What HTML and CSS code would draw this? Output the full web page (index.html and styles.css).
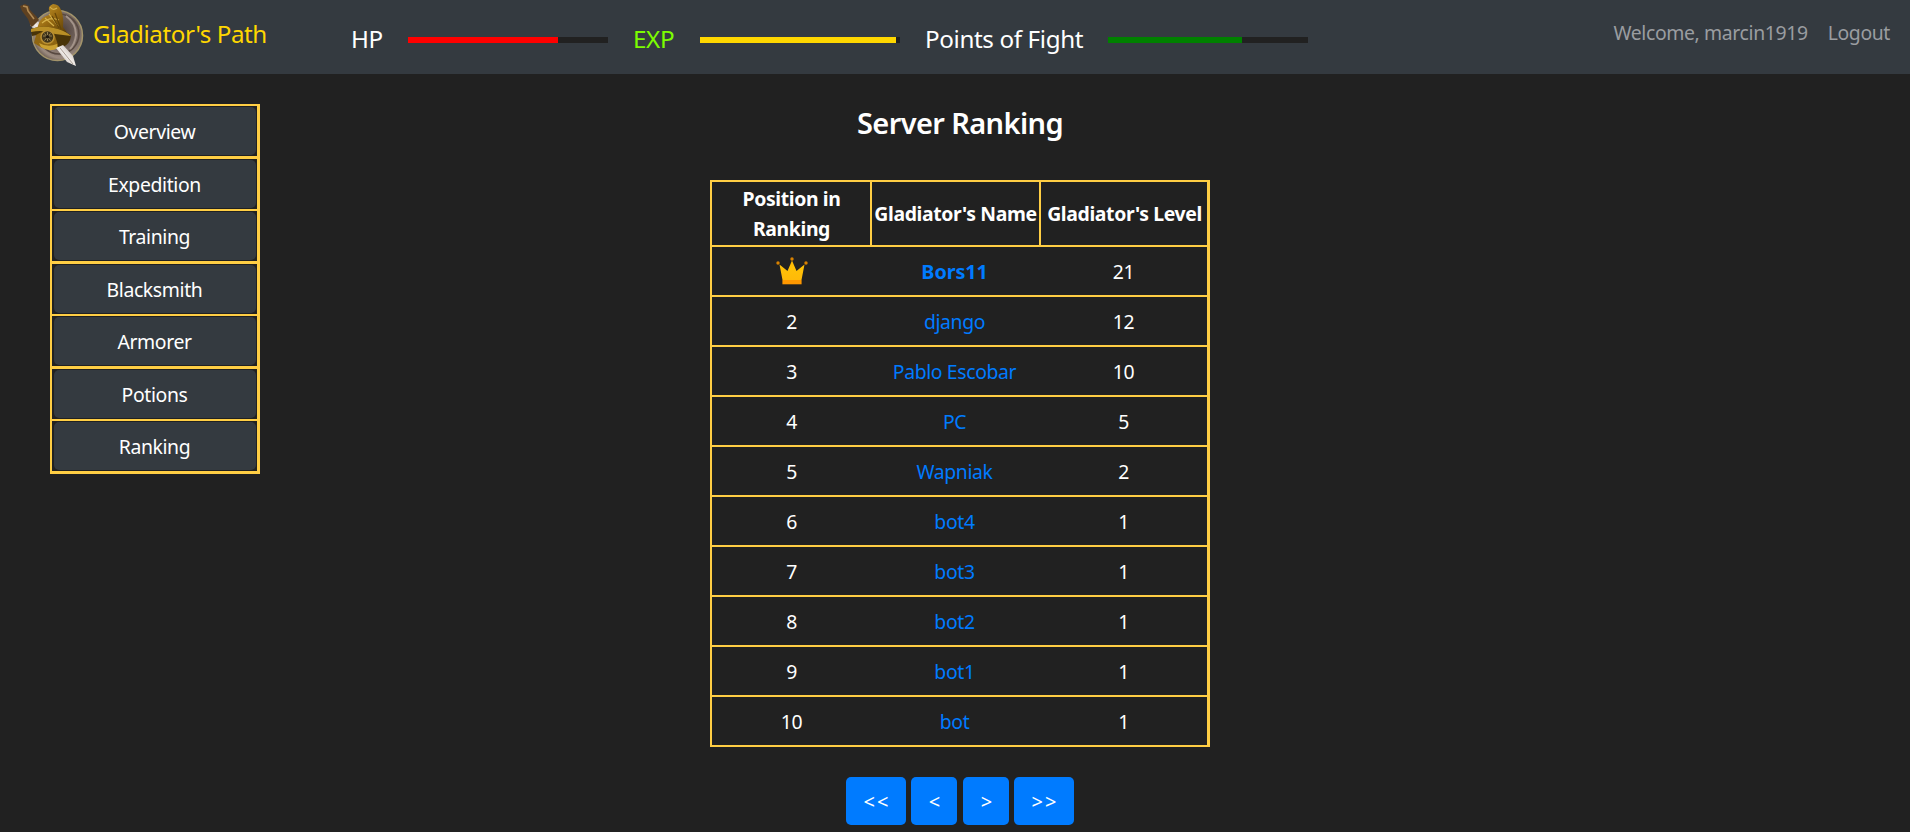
FILE: index.html
```html
<!DOCTYPE html>
<html lang="en">
<head>
<meta charset="utf-8">
<title>Gladiator's Path</title>
<link rel="stylesheet" href="styles.css">
</head>
<body>
<header class="navbar">
  <a class="brand">
    <svg class="logo" viewBox="0 0 64 62" width="64" height="62">
      <defs>
        <radialGradient id="shield" cx=".6" cy=".4" r=".65"><stop offset="0" stop-color="#4d403b"/><stop offset=".55" stop-color="#796a63"/><stop offset=".85" stop-color="#9b8a7f"/><stop offset="1" stop-color="#66574d"/></radialGradient>
        <linearGradient id="gold" x1="0" y1="0" x2="1" y2="1"><stop offset="0" stop-color="#cfa436"/><stop offset=".45" stop-color="#9a6c12"/><stop offset="1" stop-color="#452f05"/></linearGradient>
        <linearGradient id="blade" x1="0" y1="1" x2="1" y2="0"><stop offset="0" stop-color="#8b807a"/><stop offset=".5" stop-color="#f3eeea"/><stop offset="1" stop-color="#a99c94"/></linearGradient>
      </defs>
      <circle cx="37.500" cy="31.500" r="25" fill="url(#shield)" stroke="#a3946b" stroke-width="1.500"/>
      <circle cx="39" cy="30" r="20" fill="none" stroke="#584941" stroke-width="1.500"/>
      <path d="M46 12q10 7 10 19q-1 9-6 14" fill="none" stroke="#a39389" stroke-width="2"/>
      <path d="M10 21l6-5 9 7-7 7z" fill="url(#blade)"/>
      <path d="M0 2l5-2 4 2 1 4 6 6 3 4-6 6-2 1-3-8-6-8z" fill="#5f4120"/>
      <path d="M3 2l4 1 1 4 6 8" fill="none" stroke="#b08a54" stroke-width="1.600"/>
      <path d="M19 19q2-6 10-8 2-2 0-5-1-4 4-6 6 0 8 6 3 7 2 17l7 10-11 1-24-4z" fill="url(#gold)"/>
      <path d="M30 3q3 4 7 1M22 19q8-7 17-3M29 10l9 12M25 14l9 8" fill="none" stroke="#d6b14a" stroke-width="1.200"/>
      <path d="M35 9l6 16M32 12l7 12" fill="none" stroke="#654609" stroke-width="1.200"/>
      <path d="M11 25q12-5 27 0 10 3 13 7-1 8-8 11-9 2-14-5-8-9-17-6z" fill="#493408"/>
      <path d="M11 25q12-5 27 0 9 3 13 7-8-1-16-2-12-5-24-2z" fill="#b98f26"/>
      <path d="M16 31q10-7 19 1l3 9-5 4-11-1-8-5z" fill="#8f6612"/>
      <circle cx="27.500" cy="33" r="6.500" fill="#42361a" stroke="#b98f32" stroke-width="1.500"/>
      <path d="M23 32h9M24.500 29.500l6 7M30.500 29.500l-6 7M27.500 28v9" stroke="#a89463" stroke-width=".8"/>
      <circle cx="27.500" cy="32.800" r="1.800" fill="#201a10"/>
      <path d="M19 39q9 5 18 1l1 4q-9 5-17-1z" fill="#cba132"/>
      <path d="M36 44l7-3 10 11 3 10-9-4z" fill="url(#blade)"/>
      <path d="M40 44l13 16" stroke="#a89c93" stroke-width="1"/>
    </svg>
    <span class="brand-name">Gladiator's Path</span>
  </a>
  <div class="stats">
    <span class="stat-label">HP</span><div class="bar"><div class="fill hp" style="width:75%"></div></div>
    <span class="stat-label exp-label">EXP</span><div class="bar"><div class="fill exp" style="width:98%"></div></div>
    <span class="stat-label pof-label">Points of Fight</span><div class="bar"><div class="fill pof" style="width:67%"></div></div>
  </div>
  <nav class="account"><span>Welcome, marcin1919</span><a>Logout</a></nav>
</header>
<main class="page">
  <nav class="menu">
    <a class="menu-item"><span>Overview</span></a>
    <a class="menu-item"><span>Expedition</span></a>
    <a class="menu-item"><span>Training</span></a>
    <a class="menu-item"><span>Blacksmith</span></a>
    <a class="menu-item"><span>Armorer</span></a>
    <a class="menu-item"><span>Potions</span></a>
    <a class="menu-item"><span>Ranking</span></a>
  </nav>
  <section class="ranking">
    <h1 class="title">Server Ranking</h1>
    <div class="table">
      <div class="row head"><div>Position in<br>Ranking</div><div>Gladiator's Name</div><div>Gladiator's Level</div></div>
      <div class="row"><div><svg class="crown" viewBox="0 0 32 28" width="32" height="28">
        <defs><linearGradient id="crownFill" x1="0" y1="0" x2="0" y2="1"><stop offset="0" stop-color="#ffb300"/><stop offset=".35" stop-color="#ffc107"/><stop offset="1" stop-color="#ffba08"/></linearGradient></defs>
        <path d="M3.500 7.500L11.500 14 16 3.500 20.500 14 28.500 7.500 25.500 23H6.500z" fill="url(#crownFill)"/>
        <path d="M6.400 23h19.200v4.300H6.400z" fill="#ff9800"/>
        <circle cx="2" cy="6" r="1.700" fill="#d98200"/><circle cx="16" cy="2" r="1.700" fill="#d98200"/><circle cx="30" cy="6" r="1.700" fill="#d98200"/>
      </svg></div><div><a class="first">Bors11</a></div><div>21</div></div>
      <div class="row"><div>2</div><div><a>django</a></div><div>12</div></div>
      <div class="row"><div>3</div><div><a>Pablo Escobar</a></div><div>10</div></div>
      <div class="row"><div>4</div><div><a>PC</a></div><div>5</div></div>
      <div class="row"><div>5</div><div><a>Wapniak</a></div><div>2</div></div>
      <div class="row"><div>6</div><div><a>bot4</a></div><div>1</div></div>
      <div class="row"><div>7</div><div><a>bot3</a></div><div>1</div></div>
      <div class="row"><div>8</div><div><a>bot2</a></div><div>1</div></div>
      <div class="row"><div>9</div><div><a>bot1</a></div><div>1</div></div>
      <div class="row"><div>10</div><div><a>bot</a></div><div>1</div></div>
    </div>
    <div class="pager"><button class="wide">&lt;&lt;</button><button>&lt;</button><button>&gt;</button><button class="wide">&gt;&gt;</button></div>
  </section>
</main>
</body>
</html>
```
FILE: styles.css
```css
* { box-sizing: border-box; }
body {
  margin: 0;
  height: 832px;
  overflow: hidden;
  background: #212121;
  color: #fff;
  font: 19.4px/30px "Noto Sans", "Open Sans", sans-serif;
  letter-spacing: -.37px;
}
.navbar {
  display: flex;
  align-items: flex-start;
  height: 74px;
  padding: 3px 20px 0;
  background: #343a40;
}
.brand { display: flex; width: 331px; color: gold; }
.logo { flex: none; margin-top: 1px; }
.brand-name { padding: 13px 0 0 9px; font-size: 24.2px; line-height: 36px; letter-spacing: -.44px; white-space: nowrap; }
.stats {
  display: grid;
  grid-template-columns: 57px 225px 67px 224px 184px 200px;
  align-items: center;
  padding-top: 18px;
}
.stat-label { font-size: 24.2px; line-height: 36px; white-space: nowrap; }
.exp-label { color: #7cfc00; }
.pof-label { padding-left: 1px; }
.bar { width: 200px; height: 6px; margin-top: 2px; background: #212121; }
.fill { height: 100%; }
.hp { background: red; }
.exp { background: gold; }
.pof { background: green; }
.account { display: flex; gap: 20px; margin-left: auto; padding-top: 15px; color: #9a9da0; }

.page { display: flex; gap: 50px; padding: 30px 0 0 50px; }
.menu {
  display: grid;
  grid-template-rows: 53px 52px 53px 52px 53px 52px 55px;
  align-self: flex-start;
  width: 210px;
  border: solid #ffce44;
  border-width: 0 3px 0 2px;
}
.menu-item { display: flex; padding: 1px 1px 1px 2px; border-top: 2px solid #ffce44; }
.menu-item:nth-child(odd) { border-bottom: 1px solid #ffce44; }
.menu-item:last-child { border-bottom-width: 3px; }
.menu-item span { flex: 1; display: grid; place-items: center; padding: 2px 1px 0 0; border-radius: 5px; background: #343a40; }

.ranking { display: flex; flex-direction: column; align-items: center; width: 1300px; }
.title { margin: 0 0 39px; font-size: 29px; line-height: 37px; font-weight: 600; letter-spacing: -.6px; }
.table { width: 500px; border: solid #ffce44; border-width: 2px 3px 0 2px; }
.row {
  display: grid;
  grid-template-columns: 158px 169px 1fr;
  height: 50px;
  border-bottom: 2px solid #ffce44;
  text-align: center;
}
.row > div { display: grid; place-items: center; padding-top: 2px; white-space: nowrap; }
.row > div:first-child { padding-left: 1px; }
.row > div:last-child { padding-left: 1px; }
.head { height: 65px; font-weight: 700; }
.head > div { padding-top: 1px; }
.head > div + div { border-left: 2px solid #ffce44; }
.row a { color: #007bff; }
.row .first { font-size: 19.8px; font-weight: 700; letter-spacing: -.1px; }
.row .crown { margin-top: -2px; }
.pager { display: flex; margin-top: 30px; gap: 5px; }
.pager button {
  width: 46px;
  height: 48px;
  padding: 2px 0 0 1px;
  border: 0;
  border-radius: 5px;
  background: #007bff;
  color: #fff;
  font: 20px/30px "Noto Sans", sans-serif;
  letter-spacing: 0;
}
.pager .wide { width: 60px; padding-left: 2px; letter-spacing: 2px; }
.pager button:nth-child(3) { margin-left: 1px; }
```
